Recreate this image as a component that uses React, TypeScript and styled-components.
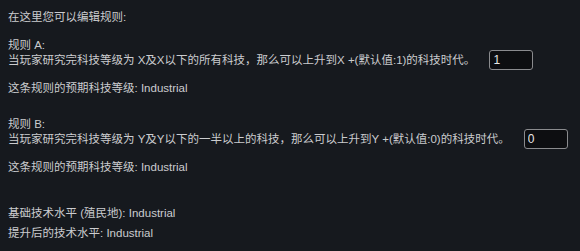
import React from "react";
import styled, { createGlobalStyle } from "styled-components";

const GlobalStyle = createGlobalStyle`
  html, body {
    margin: 0;
    padding: 0;
    background: #16191e;
  }
`;

const Page = styled.div`
  box-sizing: border-box;
  width: 580px;
  height: 251px;
  padding: 10px 8px 0 8px;
  background: #16191e;
  color: #cbcccf;
  font-family: "Liberation Sans", "Noto Sans CJK SC", sans-serif;
  font-size: 11.5px;
  line-height: 14px;
`;

const Line = styled.div<{ $gap?: number }>`
  display: flex;
  align-items: center;
  white-space: nowrap;
  margin-top: ${(p) => p.$gap ?? 0}px;
`;

const NumberBox = styled.input`
  box-sizing: border-box;
  width: 44px;
  height: 20px;
  margin-left: 14px;
  padding: 0 3px;
  background: #0d0e11;
  color: #e6e6e6;
  border: 1px solid #8a8b8e;
  border-radius: 3px;
  font-family: "Liberation Sans", sans-serif;
  font-size: 12px;
  outline: none;
`;

interface Rule {
  name: string;
  text: string;
  value: string;
  gap: number;
}

const rules: Rule[] = [
  {
    name: "规则 A:",
    text: "当玩家研究完科技等级为 X及X以下的所有科技，那么可以上升到X +(默认值:1)的科技时代。",
    value: "1",
    gap: 14,
  },
  {
    name: "规则 B:",
    text: "当玩家研究完科技等级为 Y及Y以下的一半以上的科技，那么可以上升到Y +(默认值:0)的科技时代。",
    value: "0",
    gap: 22,
  },
];

export default function App() {
  return (
    <>
      <GlobalStyle />
      <Page>
        <Line>在这里您可以编辑规则:</Line>
        {rules.map((r) => (
          <React.Fragment key={r.name}>
            <Line $gap={r.gap}>{r.name}</Line>
            <Line $gap={-2}>
              {r.text}
              <NumberBox defaultValue={r.value} />
            </Line>
            <Line $gap={11}>这条规则的预期科技等级: Industrial</Line>
          </React.Fragment>
        ))}
        <Line $gap={32}>基础技术水平 (殖民地): Industrial</Line>
        <Line $gap={6}>提升后的技术水平: Industrial</Line>
      </Page>
    </>
  );
}
